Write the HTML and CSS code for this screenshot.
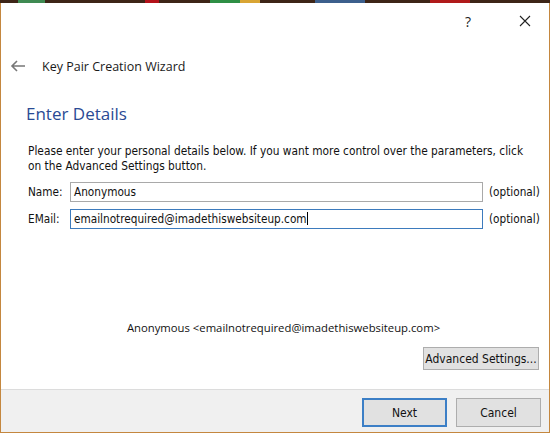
FILE: index.html
```html
<!DOCTYPE html>
<html>
<head>
<meta charset="utf-8">
<link rel="stylesheet" href="styles.css">
</head>
<body>
<div class="taskbar">
  <span class="tb s1"></span><span class="tb g1"></span><span class="tb s2"></span><span class="tb r1"></span><span class="tb s3"></span><span class="tb g2"></span><span class="tb y1"></span><span class="tb s4"></span><span class="tb b1"></span><span class="tb s5"></span><span class="tb r2"></span><span class="tb s6"></span>
</div>
<div class="window">
  <div class="titlebar">
    <span class="help">?</span>
    <svg class="close" width="12" height="12" viewBox="0 0 12 12"><path d="M1 1 L11 11 M11 1 L1 11" stroke="#222" stroke-width="1.1" fill="none"/></svg>
  </div>
  <div class="header">
    <svg class="back" width="16" height="12" viewBox="0 0 16 12"><path d="M15 6 H2 M7 1 L2 6 L7 11" stroke="#777" stroke-width="1.6" fill="none"/></svg>
    <span class="wtitle">Key Pair Creation Wizard</span>
  </div>
  <div class="content">
    <h1 class="page-title">Enter Details</h1>
    <p class="intro">Please enter your personal details below. If you want more control over the parameters, click on the Advanced Settings button.</p>
    <div class="form">
      <label class="lbl">Name:</label>
      <div class="field">Anonymous</div>
      <span class="opt">(optional)</span>
      <label class="lbl">EMail:</label>
      <div class="field focus">emailnotrequired@imadethiswebsiteup.com<span class="caret"></span></div>
      <span class="opt">(optional)</span>
    </div>
    <div class="spacer"></div>
    <div class="preview">Anonymous &lt;emailnotrequired@imadethiswebsiteup.com&gt;</div>
    <div class="adv-row"><button class="btn adv">Advanced Settings...</button></div>
  </div>
  <div class="footer">
    <button class="btn next">Next</button>
    <button class="btn cancel">Cancel</button>
  </div>
</div>
</body>
</html>
```

FILE: styles.css
```css
html, body {
  margin: 0;
  padding: 0;
}
body {
  width: 550px;
  height: 433px;
  overflow: hidden;
  background: #fff;
  font-family: "DejaVu Sans Condensed", "DejaVu Sans", sans-serif;
  font-size: 12px;
  color: #111;
}
.taskbar {
  display: flex;
  height: 3px;
  background: #3d2517;
}
.tb { display: block; height: 3px; }
.s1 { width: 18px; }
.g1 { width: 27px; background: #3f8a52; }
.s2 { width: 100px; }
.r1 { width: 14px; background: #b3121a; }
.s3 { width: 51px; }
.g2 { width: 30px; background: #2f8f45; }
.y1 { width: 20px; background: #d9a534; }
.s4 { width: 55px; }
.b1 { width: 50px; background: #3c5f8c; }
.s5 { width: 65px; }
.r2 { width: 40px; background: #b01a1a; }
.s6 { flex: 1; }
.window {
  height: 430px;
  box-sizing: border-box;
  border: 1px solid #c4873f;
  border-top: none;
  display: flex;
  flex-direction: column;
  background: #fff;
}
.titlebar {
  height: 34px;
  display: flex;
  align-items: center;
  justify-content: flex-end;
  padding-right: 18px;
  gap: 48px;
}
.help {
  font-family: "Open Sans", sans-serif;
  font-size: 14px;
  color: #222;
  margin-top: 2px;
}
.close { margin-top: 2px; }
.header {
  height: 30px;
  margin-top: 14px;
  display: flex;
  align-items: center;
  padding-left: 9px;
}
.back { margin-right: 16px; }
.wtitle {
  font-family: "Open Sans", sans-serif;
  font-size: 12.5px;
  color: #1a1a1a;
}
.content {
  flex: 1;
  display: flex;
  flex-direction: column;
  padding: 0 10px 0 27px;
}
.page-title {
  margin: 20px 0 0 -2px;
  font-family: "Open Sans", sans-serif;
  font-weight: normal;
  font-size: 17px;
  color: #2a4a94;
  line-height: 26px;
}
.intro {
  margin: 17px 0 0 0;
  line-height: 15px;
  width: 510px;
  font-size: 11.8px;
}
.form {
  margin-top: 8px;
  display: grid;
  grid-template-columns: 36px 413px auto;
  column-gap: 6px;
  row-gap: 7px;
  align-items: center;
}
.field {
  height: 20px;
  box-sizing: border-box;
  border: 1px solid #a9a9a9;
  padding: 0 3px;
  line-height: 18px;
  font-size: 11.7px;
  white-space: nowrap;
}
.field.focus { border-color: #3d7bbd; }
.caret {
  display: inline-block;
  width: 1px;
  height: 13px;
  background: #000;
  vertical-align: -2px;
}
.lbl, .opt { font-size: 11.7px; }
.spacer { flex: 1; }
.preview {
  text-align: center;
  font-family: "Open Sans", sans-serif;
  font-size: 11.3px;
  line-height: 16px;
}
.adv-row {
  display: flex;
  justify-content: flex-end;
  margin-top: 11px;
  margin-bottom: 19px;
}
.btn {
  font-family: "DejaVu Sans Condensed", "DejaVu Sans", sans-serif;
  font-size: 12px;
  background: #e1e1e1;
  border: 1px solid #adadad;
  color: #111;
  padding: 0;
  margin: 0;
}
.adv { width: 116px; height: 23px; }
.footer {
  height: 43px;
  box-sizing: border-box;
  border-top: 1px solid #dcdcdc;
  background: #f0f0f0;
  display: flex;
  justify-content: flex-end;
  align-items: flex-start;
  padding: 8px 8px 0 0;
  gap: 9px;
}
.next, .cancel { width: 85px; height: 29px; }
.next { border: 2px solid #3c7fc6; }
```
